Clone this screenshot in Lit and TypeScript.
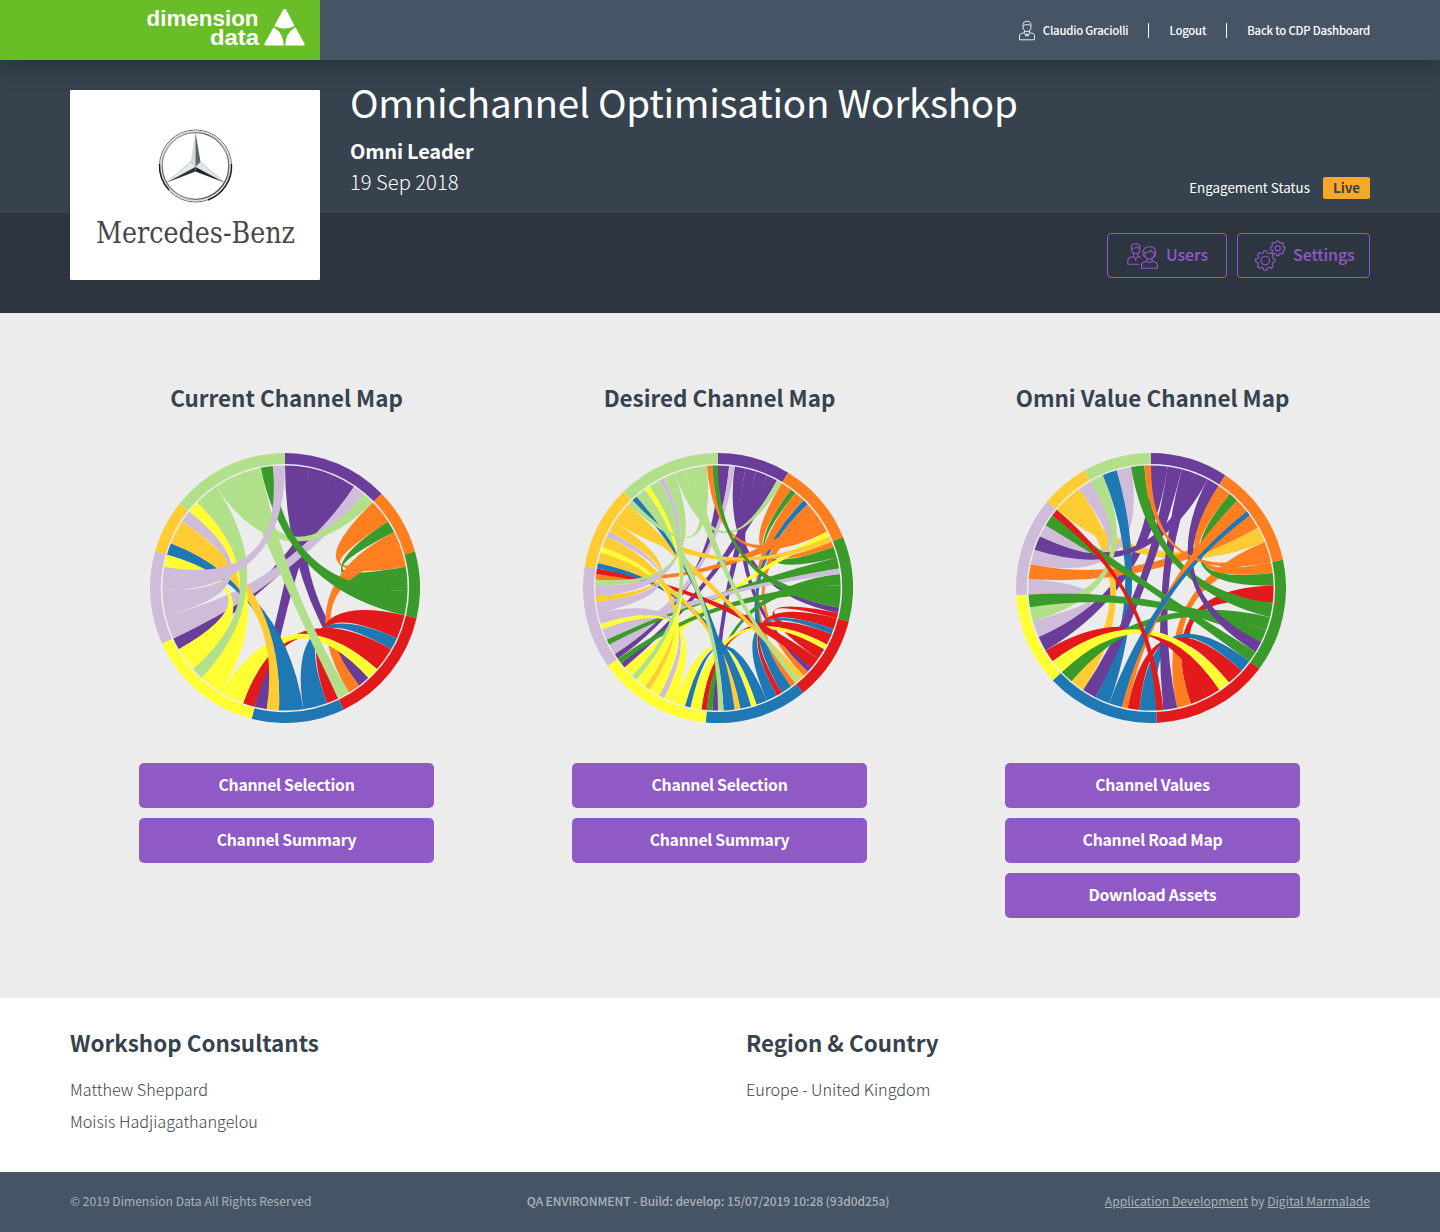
import { LitElement, html, svg, css } from "lit";
import { customElement, property } from "lit/decorators.js";

const COLORS = ["#6a3d9a", "#ff7f20", "#3a9b2a", "#e31a1c", "#1f78b4", "#ffff33", "#cfbcd9", "#ffcc33", "#b2df8a"];
const [P, O, G, R, B, Y, LP, YO, LG] = [0, 1, 2, 3, 4, 5, 6, 7, 8];

interface Ribbon { color: number; s: [number, number]; t: [number, number]; }
interface Wheel { groups: number[]; ribbons: Ribbon[]; }

/** Builds a wheel from directed links: two units wide at the source, one at the target. */
function fromLinks(links: number[][]): Wheel {
  const has = (a: number, b: number) => links[a].includes(b);
  const outs = new Map<string, [number, number]>();
  const ins = new Map<string, [number, number]>();
  const ends: number[] = [];
  const unit = 360 / (3 * links.reduce((n, l) => n + l.length, 0));
  let pos = 0;
  const put = (m: Map<string, [number, number]>, a: number, b: number, w: number) => {
    m.set(a + ">" + b, [pos * unit, (pos + w) * unit]);
    pos += w;
  };
  const all = COLORS.map((_, i) => i);
  for (const i of all) {
    const both = all.filter((j) => has(i, j) && has(j, i));
    for (const j of both) {
      if (i < j) { put(outs, i, j, 2); put(ins, j, i, 1); }
      else { put(ins, j, i, 1); put(outs, i, j, 2); }
    }
    for (const j of all) if (has(i, j) && !has(j, i)) put(outs, i, j, 2);
    for (const j of all) if (has(j, i) && !has(i, j)) put(ins, j, i, 1);
    ends.push(pos * unit);
  }
  const ribbons: Ribbon[] = [];
  for (const i of all) for (const j of all) {
    if (j <= i) continue;
    for (const [a, b] of [[i, j], [j, i]]) {
      if (has(a, b)) ribbons.push({ color: a, s: outs.get(a + ">" + b)!, t: ins.get(a + ">" + b)! });
    }
  }
  return { groups: ends, ribbons };
}

function fromRibbons(groups: number[], rows: number[][]): Wheel {
  const ribbons = rows.map(([color, a, b, c, d]) => ({ color, s: [a, b], t: [c, d] }) as Ribbon);
  const size = (r: Ribbon) => r.s[1] - r.s[0] + r.t[1] - r.t[0];
  ribbons.sort((x, y) => size(y) - size(x));
  return { groups, ribbons };
}

const CURRENT = fromLinks([
  [R, B, Y], [G, R], [O, LG], [B, Y], [R, YO], [R, LP, LG], [P, YO, LG], [B], [P, R, Y],
]);
const DESIRED = fromLinks([
  [G, R, B, Y, LP], [G, R, B, LP, LG], [O, B, Y, LP, LG], [G, B, Y, LP], [O, R, Y, YO, LG],
  [O, R, B, LP, YO, LG], [P, G, Y, YO, LG], [O, R, B, Y, LP], [P, R, B, Y, LP, YO],
]);
const VALUE = fromRibbons(
  [33.4, 77.9, 126.7, 177.6, 226.7, 267, 309.7, 330.4, 360],
  [
    [P, 0, 7.8, 239.3, 246.4], [P, 7.8, 14.6, 206.8, 213.6], [P, 14.6, 21.2, 167.7, 174.2],
    [P, 21.2, 27.5, 288.2, 295], [P, 27.5, 33.4, 116.1, 121.4],
    [O, 33.4, 40, 77.9, 82.9], [O, 44.7, 51.3, 191, 193.7], [O, 53.8, 60.6, 274.2, 281.2],
    [O, 68, 75, 161, 167.7], [O, 75, 77.9, 356.9, 360],
    [G, 82.9, 88.9, 40, 44.7], [G, 97, 103.8, 350.6, 356.9], [G, 103.8, 109.9, 220.4, 226.7],
    [G, 109.9, 116.1, 261, 267], [G, 121.4, 126.7, 300.8, 306.3],
    [R, 132.4, 140.5, 185.4, 191], [R, 146.1, 152.8, 233.3, 239.3], [R, 152.8, 161, 88.9, 97],
    [R, 174.2, 177.6, 306.3, 309.7],
    [B, 177.6, 185.4, 126.7, 132.4], [B, 193.7, 199.9, 51.3, 53.8], [B, 199.9, 206.8, 336.8, 343.7],
    [Y, 226.7, 233.3, 140.5, 146.1],
    [LP, 267, 274.2, 246.4, 254.3], [LP, 281.2, 288.2, 343.7, 350.6], [LP, 295, 300.8, 324.1, 330.4],
    [YO, 309.7, 316.9, 60.6, 68], [YO, 316.9, 324.1, 213.6, 220.4],
    [LG, 330.4, 336.8, 254.3, 261],
  ],
);

function pt(deg: number, r: number): string {
  const a = (deg * Math.PI) / 180;
  return (r * Math.sin(a)).toFixed(2) + "," + (-r * Math.cos(a)).toFixed(2);
}
function ribbonPath({ s, t }: Ribbon): string {
  const r = 122.6;
  return `M${pt(s[0], r)}A${r},${r} 0 0 1 ${pt(s[1], r)}Q0,0 ${pt(t[0], r)}A${r},${r} 0 0 1 ${pt(t[1], r)}Q0,0 ${pt(s[0], r)}Z`;
}
function ringPath(a: number, b: number): string {
  const o = 135, i = 124.1;
  return `M${pt(a, o)}A${o},${o} 0 0 1 ${pt(b, o)}L${pt(b, i)}A${i},${i} 0 0 0 ${pt(a, i)}Z`;
}

@customElement("channel-wheel")
export class ChannelWheel extends LitElement {
  @property({ attribute: false }) wheel!: Wheel;
  static styles = css`
    :host { display: block; width: 270px; height: 270px; }
    svg { display: block; }
  `;
  render() {
    const { groups, ribbons } = this.wheel;
    return html`<svg width="270" height="270" viewBox="-135 -135 270 270">
      ${groups.map((end, i) => svg`<path d=${ringPath(i ? groups[i - 1] : 0, end)} fill=${COLORS[i]}></path>`)}
      ${ribbons.map((r) => svg`<path d=${ribbonPath(r)} fill=${COLORS[r.color]}></path>`)}
    </svg>`;
  }
}

function gear(cx: number, cy: number, r: number, depth: number, teeth: number): string {
  const step = (Math.PI * 2) / teeth;
  let d = "";
  for (let k = 0; k < teeth; k++) {
    const a = k * step;
    const at = (off: number, rad: number) =>
      (cx + rad * Math.sin(a + off * step)).toFixed(2) + "," + (cy - rad * Math.cos(a + off * step)).toFixed(2);
    d += `${k ? "L" : "M"}${at(-0.3, r - depth)}L${at(-0.2, r)}L${at(0.2, r)}L${at(0.3, r - depth)}`;
    d += `A${r - depth},${r - depth} 0 0 1 ${at(0.7, r - depth)}`;
  }
  return d + "Z";
}

const MAPS = [
  { title: "Current Channel Map", wheel: CURRENT, actions: ["Channel Selection", "Channel Summary"] },
  { title: "Desired Channel Map", wheel: DESIRED, actions: ["Channel Selection", "Channel Summary"] },
  { title: "Omni Value Channel Map", wheel: VALUE, actions: ["Channel Values", "Channel Road Map", "Download Assets"] },
];

@customElement("app-root")
export class AppRoot extends LitElement {
  static styles = css`
    :host { display: block; width: 1440px; height: 1232px; font-family: "Noto Sans CJK SC", "Open Sans", sans-serif; color: #36434e; background: #fff; }
    * { box-sizing: border-box; }
    h1, h2, h3, p { margin: 0; }
    a { color: inherit; }
    svg { display: block; flex: none; }
    .top { position: relative; height: 60px; background: #465565; display: flex; justify-content: space-between; box-shadow: 0 5px 25px rgba(0, 0, 0, .3); }
    .brand { width: 320px; height: 60px; background: #69be28; display: flex; justify-content: flex-end; padding: 0 14px 0 0; }
    .nav { display: flex; align-items: center; padding-right: 70px; color: #fff; font-size: 11.4px; line-height: 16px; font-weight: 500; letter-spacing: -.23px; white-space: nowrap; }
    .nav svg { margin-right: 7px; }
    .nav i { width: 1px; height: 15px; background: #fff; margin: 0 20px; }
    .hero { height: 253px; background: linear-gradient(#36434e 153px, #2d3640 153px); display: flex; padding: 30px 70px 0; }
    .client { width: 250px; height: 190px; background: #fff; border-radius: 1px; }
    .info { flex: 1; margin-left: 30px; color: #fff; display: flex; flex-direction: column; }
    h1 { font-size: 38.6px; line-height: 50px; font-weight: 400; letter-spacing: -.28px; margin-top: -14px; white-space: nowrap; }
    .role { font-size: 20px; line-height: 30px; font-weight: 700; letter-spacing: -.2px; margin-top: 10px; }
    .meta { display: flex; justify-content: space-between; height: 47px; }
    .date { font-size: 20.200px; line-height: 30px; font-weight: 300; padding-top: 1px; }
    .status { display: flex; align-items: center; font-size: 13.400px; line-height: 20px; height: 22px; margin-top: 11px; }
    .status .label { padding-bottom: 2px; }
    .badge { background: #f6a828; color: #36434e; font-weight: 700; width: 47px; height: 22px; border-radius: 2px; text-align: center; margin-left: 13px; }
    .tools { display: flex; justify-content: flex-end; gap: 10px; margin-top: 20px; }
    .tool { height: 45px; border: 1px solid #9059c8; border-radius: 4px; color: #9059c8; display: flex; align-items: center; font-size: 16px; line-height: 24px; font-weight: 500; letter-spacing: -.1px; }
    .tool span { margin-top: -3px; }
    .users { width: 120px; padding-left: 19px; gap: 8px; }
    .settings { width: 133px; padding-left: 17px; gap: 7px; }
    .maps { height: 685px; background: #ececec; padding: 68px 70px 0; display: grid; grid-template-columns: repeat(3, 433px); align-items: start; }
    .map { display: flex; flex-direction: column; align-items: center; }
    h2 { font-size: 22.4px; line-height: 32px; font-weight: 700; white-space: nowrap; }
    channel-wheel { margin: 40px 3px 40px 0; }
    .actions { display: grid; gap: 10px; width: 295px; }
    .action { height: 45px; border-radius: 5px; background: #8f59c6; color: #fff; text-align: center; font-size: 15.800px; line-height: 44px; font-weight: 700; letter-spacing: -.27px; }
    .details { height: 174px; padding: 28px 70px 0; display: grid; grid-template-columns: 676px 1fr; }
    .details p { font-size: 16.200px; line-height: 32px; font-weight: 300; }
    .details h2 { margin-bottom: 15px; }
    .foot { height: 60px; background: #465565; color: #aab2ba; padding: 0 70px 2px; display: flex; justify-content: space-between; align-items: center; font-size: 12.100px; line-height: 18px; white-space: nowrap; }
    .foot .env { font-weight: 500; font-size: 12px; letter-spacing: -.1px; }
  `;

  render() {
    return html`
      <header class="top">
        <div class="brand">
          <svg width="162" height="60" viewBox="0 0 162 60" fill="#fff">
            <text x="2.500" y="26" font-family="Liberation Sans, sans-serif" font-weight="700" font-size="21.500" textLength="112" lengthAdjust="spacingAndGlyphs">dimension</text>
            <text x="66" y="45" font-family="Liberation Sans, sans-serif" font-weight="700" font-size="21.500" textLength="49" lengthAdjust="spacingAndGlyphs">data</text>
            <path d="M139.300 9.600Q140.700 8.200 142.100 9.600L150.600 26Q140.700 31 130.300 26Z"></path>
            <path d="M129.600 27.200Q139.400 33 139.800 45.500H121.500Q119.800 45.300 120.500 43.500Z"></path>
            <path d="M151.400 27.200Q141.500 33 141.200 45.500H159.500Q161.200 45.300 160.500 43.500Z"></path>
          </svg>
        </div>
        <nav class="nav">
          <svg width="18" height="21" viewBox="0 0 18 21" fill="none" stroke="#e4e7ea" stroke-width="1">
            <path d="M5 6.500Q4.500 1.200 9 1.200Q13.500 1.200 13 6.500Q13 11.500 9 11.500Q5 11.500 5 6.500ZM5 6Q6 4.600 9 4.600Q12 4.600 13 6"></path>
            <path d="M6.500 11V12.500L3 13.600Q1.500 14 1.500 16V19.800H16.500V16Q16.500 14 15 13.600L11.500 12.500V11M6.500 12.500L7.500 15.500L9 13.500L10.500 15.500L11.500 12.500M8 14.800L9 16.500L10 14.800"></path>
          </svg>
          <span>Claudio Graciolli</span><i></i><span>Logout</span><i></i><span>Back to CDP Dashboard</span>
        </nav>
      </header>
      <section class="hero">
        <div class="client">
          <svg width="250" height="190" viewBox="0 0 250 190">
            <defs>
              <linearGradient id="rim" x1="0" y1="0" x2="1" y2="1">
                <stop offset="0" stop-color="#c9cccd"></stop><stop offset=".35" stop-color="#5d686d"></stop>
                <stop offset=".6" stop-color="#8f989b"></stop><stop offset="1" stop-color="#1c2428"></stop>
              </linearGradient>
            </defs>
            <circle cx="125.500" cy="76" r="36" fill="none" stroke="#5f696d" stroke-width="1"></circle>
            <circle cx="125.500" cy="76" r="34.500" fill="none" stroke="#d9dcdd" stroke-width="2"></circle>
            <circle cx="125.500" cy="76" r="33.300" fill="none" stroke="url(#rim)" stroke-width="1.300"></circle>
            <path d="M89.500 74A36 36 0 0 0 99 100M161.500 74A36 36 0 0 1 138 110" fill="none" stroke="#151b1e" stroke-width="1.400"></path>
            <path d="M125.500 42L120.500 72L125.500 77Z" fill="#d5d8d9"></path>
            <path d="M125.500 42L130.500 72L125.500 77Z" fill="#59646a"></path>
            <path d="M120.500 72L97 92L125.500 77Z" fill="#e9ebeb" stroke="#99a0a3" stroke-width=".5"></path>
            <path d="M130.500 72L154 92L125.500 77Z" fill="#e3e5e6" stroke="#99a0a3" stroke-width=".5"></path>
            <path d="M97 92.500L125.500 77V81.500Z" fill="#2a3438"></path>
            <path d="M154 92.500L125.500 77V81.500Z" fill="#1d2529"></path>
            <text x="26" y="153" font-family="DejaVu Serif Condensed, DejaVu Serif, serif" font-size="29.500" fill="#474747" textLength="199" lengthAdjust="spacingAndGlyphs">Mercedes-Benz</text>
          </svg>
        </div>
        <div class="info">
          <h1>Omnichannel Optimisation Workshop</h1>
          <p class="role">Omni Leader</p>
          <div class="meta">
            <p class="date">19 Sep 2018</p>
            <div class="status"><span class="label">Engagement Status</span><span class="badge">Live</span></div>
          </div>
          <div class="tools">
            <div class="tool users">
              <svg width="31" height="26" viewBox="0 0 31 26" fill="none" stroke="#9059c8" stroke-width="1.100">
                <path d="M4.300 5Q4 .8 8.700 .8Q13.500 .8 13 5.500Q13 10.500 8.700 10.700Q4.500 10.500 4.300 5ZM4.500 5.500Q8 5.500 10 3.800Q11 5.500 13 5.500"></path>
                <path d="M6.300 10.500V13.200L2.500 14.800Q.8 15.500 .8 17.500V21.300H12.500M11 10.500V13.200L14 14.500M6.300 13.200L8.700 16L11 13.200M8.700 16V18"></path>
                <path d="M18 14Q15.500 12.500 16 8.500Q17 3.800 22.500 3.800Q28 3.800 28.700 8.500Q29 12.500 27 14M17.800 9.500Q22 9.500 24 7.500Q25 9.500 27.200 9.500Q27.500 16 22.500 16.200Q17.700 16 17.800 9.500Z"></path>
                <path d="M20 15.500V18L16 19.500Q14.500 20 14.500 22V25.200H30.300V22Q30.300 20 29 19.500L25 18V15.500M20 18Q22.500 21.500 25 18"></path>
              </svg>
              <span>Users</span>
            </div>
            <div class="tool settings">
              <svg width="31" height="31" viewBox="0 0 31 31" fill="none" stroke="#9059c8" stroke-width="1.100" stroke-linejoin="round">
                <path d=${gear(10.3, 20.5, 9.8, 1.9, 8)}></path><circle cx="10.300" cy="20.500" r="4.300"></circle>
                <path d=${gear(22.7, 8.3, 7.4, 1.5, 8)}></path><circle cx="22.700" cy="8.300" r="2.600"></circle>
              </svg>
              <span>Settings</span>
            </div>
          </div>
        </div>
      </section>
      <main class="maps">
        ${MAPS.map((m) => html`<section class="map">
          <h2>${m.title}</h2>
          <channel-wheel .wheel=${m.wheel}></channel-wheel>
          <div class="actions">${m.actions.map((a) => html`<div class="action">${a}</div>`)}</div>
        </section>`)}
      </main>
      <section class="details">
        <div><h2>Workshop Consultants</h2><p>Matthew Sheppard</p><p>Moisis Hadjiagathangelou</p></div>
        <div><h2>Region &amp; Country</h2><p>Europe - United Kingdom</p></div>
      </section>
      <footer class="foot">
        <span>© 2019 Dimension Data All Rights Reserved</span>
        <span class="env">QA ENVIRONMENT - Build: develop: 15/07/2019 10:28 (93d0d25a)</span>
        <span><u>Application Development</u> by <u>Digital Marmalade</u></span>
      </footer>
    `;
  }
}
